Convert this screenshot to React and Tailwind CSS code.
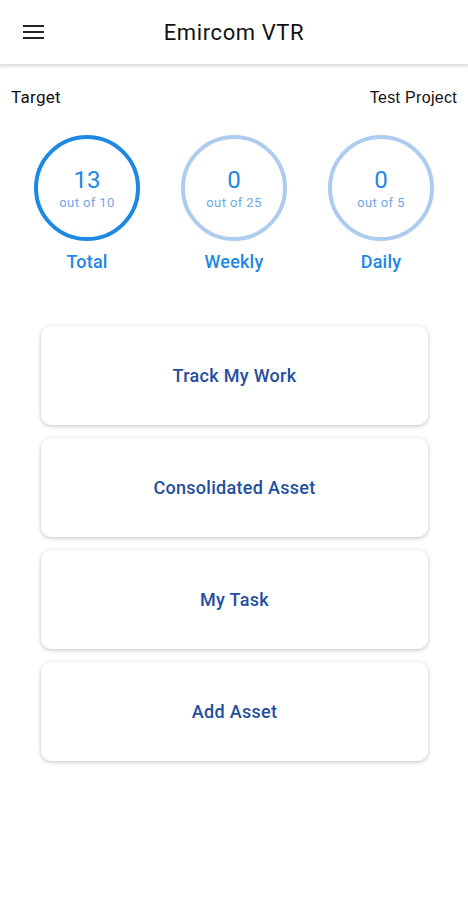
import React from "react";

const targets = [
  { label: "Total", value: 13, max: 10, ring: "border-[#1e88e5]" },
  { label: "Weekly", value: 0, max: 25, ring: "border-[#aecbf0]" },
  { label: "Daily", value: 0, max: 5, ring: "border-[#aecbf0]" },
];

const actions = ["Track My Work", "Consolidated Asset", "My Task", "Add Asset"];

export default function App() {
  return (
    <div className="min-h-[900px] bg-white font-['Roboto',sans-serif]">
      {/* App bar */}
      <div className="relative flex h-[65px] items-center justify-center border-b border-[#e0e0e0] shadow-[0_2px_3px_rgba(0,0,0,0.12)]">
        <button className="absolute left-[23px] top-[25px] flex w-[21px] flex-col gap-[4px]">
          <span className="h-[2px] w-full bg-[#222]" />
          <span className="h-[2px] w-full bg-[#222]" />
          <span className="h-[2px] w-full bg-[#222]" />
        </button>
        <h1 className="text-[22px] tracking-[0.6px] text-[#111]">Emircom VTR</h1>
      </div>

      {/* Targets */}
      <div className="flex items-center justify-between px-[11px] pt-[20px]">
        <span className="text-[17px] tracking-[0.3px] text-[#111]">Target</span>
        <span className="font-['Liberation_Sans',sans-serif] text-[16px] tracking-[0.3px] text-[#111]">
          Test Project
        </span>
      </div>

      <div className="mt-[24px] flex justify-center gap-[41px]">
        {targets.map((t) => (
          <div key={t.label} className="flex flex-col items-center">
            <div
              className={`flex h-[106px] w-[106px] flex-col items-center justify-center rounded-full border-[4px] pt-[2px] ${t.ring}`}
            >
              <span className="text-[24px] leading-[28px] text-[#1e88e5]">{t.value}</span>
              <span className="text-[13px] leading-[18px] tracking-[0.4px] text-[#6fa8e8]">
                out of {t.max}
              </span>
            </div>
            <span className="mt-[7px] text-[18px] font-medium tracking-[0.2px] text-[#1e88e5]">
              {t.label}
            </span>
          </div>
        ))}
      </div>

      {/* Actions */}
      <div className="mx-[41px] mt-[51px] flex w-[387px] flex-col gap-[13px]">
        {actions.map((a) => (
          <button
            key={a}
            className="flex h-[99px] items-center justify-center rounded-[10px] bg-white text-[18px] font-medium tracking-[0.3px] text-[#1f4f9e] shadow-[0_1px_4px_rgba(0,0,0,0.25)]"
          >
            {a}
          </button>
        ))}
      </div>
    </div>
  );
}
